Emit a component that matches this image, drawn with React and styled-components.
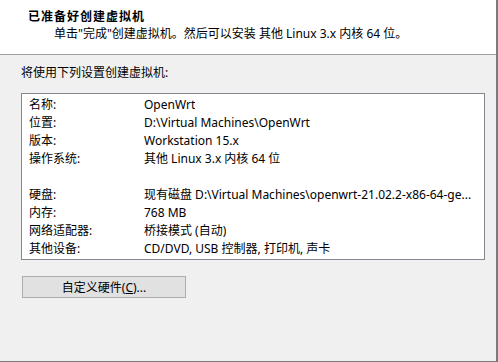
import React from "react";
import styled, { createGlobalStyle } from "styled-components";

const GlobalStyle = createGlobalStyle`
  html, body {
    margin: 0;
    padding: 0;
    background: #f0f0f0;
  }
  body {
    font-family: "Noto Sans", "Noto Sans CJK SC", sans-serif;
    font-size: 12px;
    color: #000;
  }
`;

const rows = [
  { label: "名称:", value: "OpenWrt" },
  { label: "位置:", value: "D:\\Virtual Machines\\OpenWrt" },
  { label: "版本:", value: "Workstation 15.x" },
  { label: "操作系统:", value: "其他 Linux 3.x 内核 64 位" },
  { label: "", value: "" },
  {
    label: "硬盘:",
    value: "现有磁盘 D:\\Virtual Machines\\openwrt-21.02.2-x86-64-ge...",
  },
  { label: "内存:", value: "768 MB" },
  { label: "网络适配器:", value: "桥接模式 (自动)" },
  { label: "其他设备:", value: "CD/DVD, USB 控制器, 打印机, 声卡" },
];

const App = () => {
  return (
    <>
      <GlobalStyle />
      <Window>
        <Header>
          <Title>已准备好创建虚拟机</Title>
          <Subtitle>
            单击"完成"创建虚拟机。然后可以安装 其他 Linux 3.x 内核 64 位。
          </Subtitle>
        </Header>
        <Body>
          <Intro>将使用下列设置创建虚拟机:</Intro>
          <SummaryBox>
            {rows.map((row, i) => (
              <Row key={i}>
                <Label>{row.label}</Label>
                <Value>{row.value}</Value>
              </Row>
            ))}
          </SummaryBox>
          <Button>
            自定义硬件(<u>C</u>)...
          </Button>
        </Body>
      </Window>
    </>
  );
};

export default App;

const Window = styled.div`
  display: flex;
  flex-direction: column;
  width: 496px;
  height: 361px;
  border-right: 2px solid #7a7a7a;
  border-bottom: 1px solid #7a7a7a;
  background: #f0f0f0;
  overflow: hidden;
`;

const Header = styled.div`
  display: flex;
  flex-direction: column;
  height: 55px;
  box-sizing: border-box;
  padding: 7px 0 0 28px;
  background: #ffffff;
  border-bottom: 1px solid #a0a0a0;
`;

const Title = styled.div`
  font-family: "Noto Sans CJK SC", sans-serif;
  font-weight: bold;
  font-size: 12px;
  letter-spacing: 1px;
  line-height: 18px;
`;

const Subtitle = styled.div`
  padding-left: 26px;
  line-height: 18px;
  white-space: nowrap;
`;

const Body = styled.div`
  display: flex;
  flex-direction: column;
  padding: 9px 0 0 21px;
`;

const Intro = styled.div`
  line-height: 18px;
`;

const SummaryBox = styled.div`
  display: flex;
  flex-direction: column;
  margin-top: 11px;
  width: 464px;
  height: 167px;
  box-sizing: border-box;
  padding: 2px 0 0 7px;
  background: #ffffff;
  border: 1px solid #828790;
`;

const Row = styled.div`
  display: flex;
  height: 18px;
  line-height: 18px;
  white-space: nowrap;
`;

const Label = styled.span`
  width: 115px;
  flex-shrink: 0;
`;

const Value = styled.span`
  overflow: hidden;
`;

const Button = styled.button`
  margin: 16px 0 0 1px;
  width: 164px;
  height: 22px;
  padding: 0;
  background: #e1e1e1;
  border: 1px solid #adadad;
  font-family: "Noto Sans", "Noto Sans CJK SC", sans-serif;
  font-size: 12px;
  color: #000;
  u {
    text-decoration: underline;
  }
`;
